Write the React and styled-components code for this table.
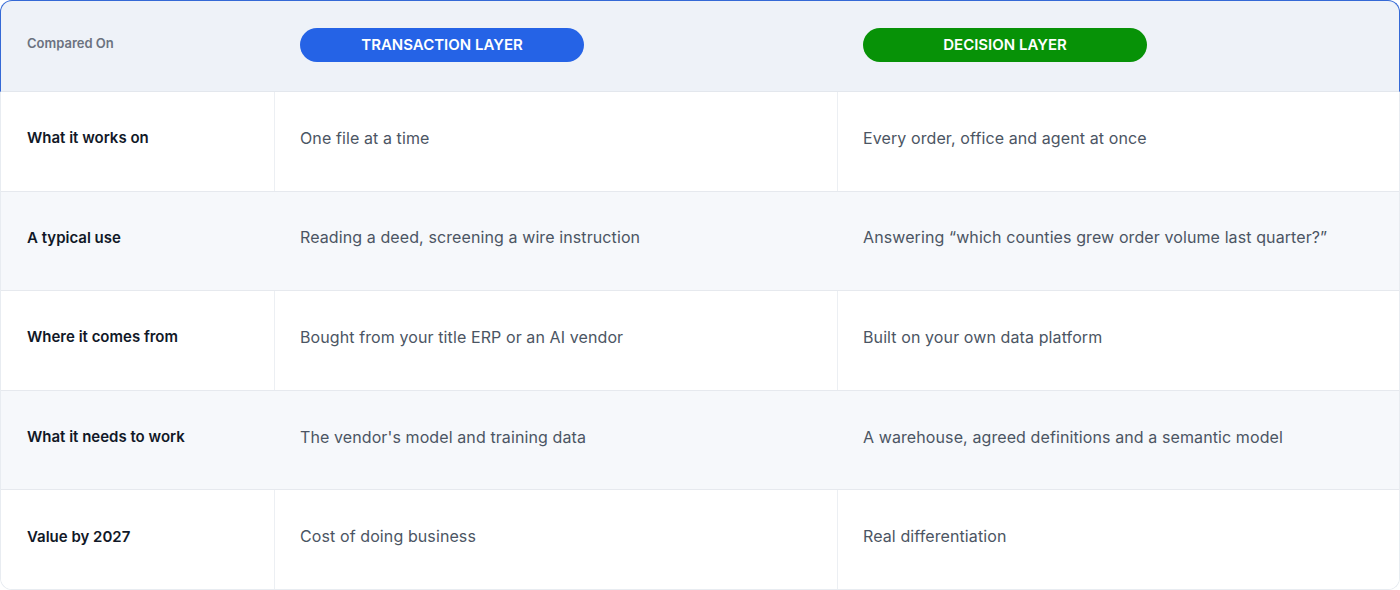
import React from 'react'
import styled, { createGlobalStyle } from 'styled-components'

const GlobalStyle = createGlobalStyle`
  html, body {
    margin: 0;
    padding: 0;
    background: #ffffff;
  }
  body {
    font-family: 'Inter', 'Noto Sans', sans-serif;
  }
`

const Table = styled.div`
  width: 1400px;
  height: 590px;
  display: flex;
  flex-direction: column;
  box-sizing: border-box;
`

const HeaderRow = styled.div`
  height: 92px;
  flex: none;
  display: grid;
  grid-template-columns: 274px 563px 1fr;
  align-items: center;
  background: #eef2f8;
  border: 1px solid #3469d6;
  border-bottom: 1px solid #e3e7ed;
  border-radius: 12px 12px 0 0;
  box-sizing: border-box;
`

const HeaderLabel = styled.div`
  padding-left: 26px;
  padding-bottom: 6px;
  font-size: 13px;
  font-weight: 600;
  color: #6b7280;
`

const HeaderCell = styled.div`
  padding-left: 25px;
`

const Pill = styled.div`
  width: 284px;
  height: 34px;
  border-radius: 17px;
  background: ${(p) => p.$color};
  color: #ffffff;
  font-size: 15px;
  font-weight: 600;
  display: flex;
  align-items: center;
  justify-content: center;
  margin-top: -3px;
`

const Body = styled.div`
  flex: 1;
  display: flex;
  flex-direction: column;
  border: 1px solid #e8ecf1;
  border-top: none;
  border-radius: 0 0 12px 12px;
  overflow: hidden;
  box-sizing: border-box;
`

const Row = styled.div`
  flex: 1;
  display: grid;
  grid-template-columns: 274px 563px 1fr;
  background: ${(p) => (p.$striped ? '#f6f8fb' : '#ffffff')};
  border-bottom: ${(p) => (p.$last ? 'none' : '1px solid #e6e9ee')};
`

const Cell = styled.div`
  display: flex;
  align-items: center;
  padding-left: 25px;
  padding-bottom: 7px;
  font-size: 16px;
  letter-spacing: 0.1px;
  color: #4b5563;
  border-right: ${(p) => (p.$divider ? '1px solid #eceff3' : '1px solid transparent')};
`

const LabelCell = styled(Cell)`
  padding-left: 26px;
  font-size: 15px;
  font-weight: 600;
  letter-spacing: 0;
  color: #111827;
`

const rows = [
  ['What it works on', 'One file at a time', 'Every order, office and agent at once'],
  ['A typical use', 'Reading a deed, screening a wire instruction', 'Answering \u201cwhich counties grew order volume last quarter?\u201d'],
  ['Where it comes from', 'Bought from your title ERP or an AI vendor', 'Built on your own data platform'],
  ['What it needs to work', "The vendor's model and training data", 'A warehouse, agreed definitions and a semantic model'],
  ['Value by 2027', 'Cost of doing business', 'Real differentiation'],
]

const App = () => {
  return (
    <>
      <GlobalStyle />
      <Table>
        <HeaderRow>
          <HeaderLabel>Compared On</HeaderLabel>
          <HeaderCell>
            <Pill $color="#2563e6">TRANSACTION LAYER</Pill>
          </HeaderCell>
          <HeaderCell>
            <Pill $color="#079207">DECISION LAYER</Pill>
          </HeaderCell>
        </HeaderRow>
        <Body>
          {rows.map((r, i) => {
            const striped = i % 2 === 1
            return (
              <Row key={r[0]} $striped={striped} $last={i === rows.length - 1}>
                <LabelCell $divider={!striped}>{r[0]}</LabelCell>
                <Cell $divider={!striped}>{r[1]}</Cell>
                <Cell>{r[2]}</Cell>
              </Row>
            )
          })}
        </Body>
      </Table>
    </>
  )
}

export default App
